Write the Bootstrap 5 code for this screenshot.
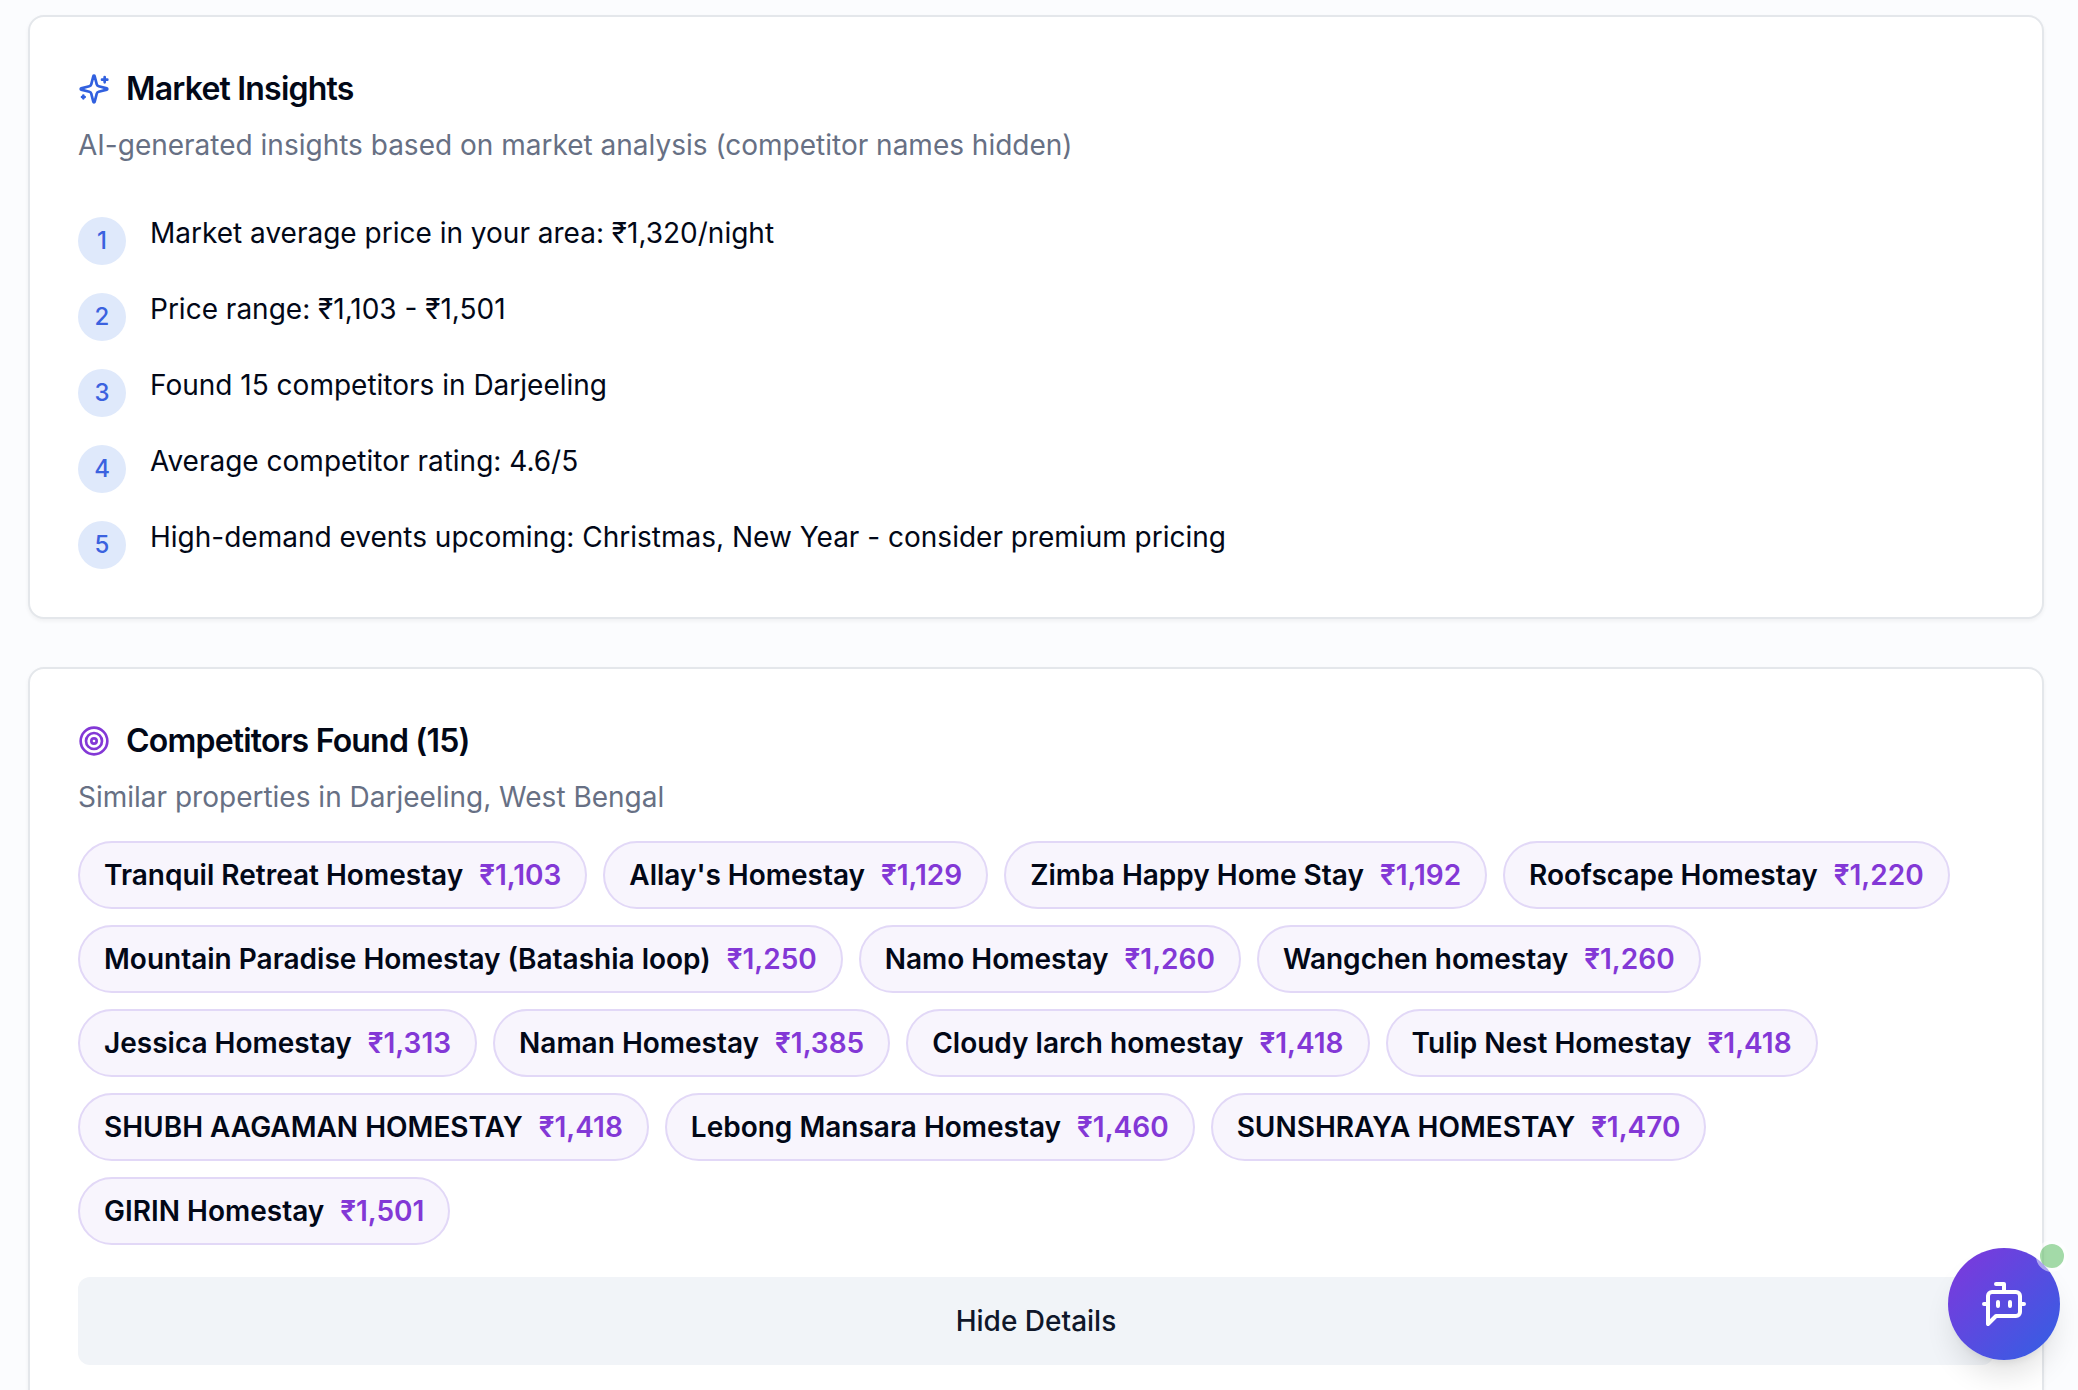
<!DOCTYPE html>
<html lang="en">
<head>
<meta charset="utf-8">
<meta name="viewport" content="width=device-width, initial-scale=1">
<title>Market Insights</title>
<link href="https://cdn.jsdelivr.net/npm/bootstrap@5.3.0/dist/css/bootstrap.min.css" rel="stylesheet">
<style>
  body { font-family: Inter, "Liberation Sans", sans-serif; font-size: 28px; line-height: 40px; color: #020817; background: #fbfcfe; }
  .page { padding: 15px 34px 0 28px; }
  .panel { border: 2px solid #e4e7eb; border-radius: 16px; margin-bottom: 48px; color: inherit; box-shadow: 0 2px 4px rgba(0, 0, 0, .05); }
  .panel > .card-body { padding: 48px; }
  .panel-title { font-size: 32px; line-height: 48px; font-weight: 600; letter-spacing: -.025em; gap: 16px; margin-bottom: 12px; }
  .panel-title svg, .chat-btn svg { fill: none; stroke: currentColor; stroke-width: 2; stroke-linecap: round; stroke-linejoin: round; }
  .panel-title svg { width: 32px; height: 32px; }
  .icon-blue { color: #3160df; }
  .icon-purple { color: #8338d6; }
  .subtitle { color: #677084; }
  .insights { gap: 24px; margin-top: 48px; }
  .insights li { gap: 24px; }
  .step { width: 48px; height: 48px; margin-top: 4px; font-size: 24px; font-weight: 500; color: #3b62df; background: #dfe9fb; }
  .chips { gap: 16px; margin-top: 24px; }
  .chip { gap: 16px; padding: 12px 24px; border: 2px solid #e2d8f7; background: #f8f5fd; font-weight: 600; }
  .price { color: #8338d6; }
  .toggle-btn { --bs-btn-font-size: 28px; --bs-btn-line-height: 40px; --bs-btn-border-radius: 12px; --bs-btn-font-weight: 500; --bs-btn-bg: #f1f4f8; --bs-btn-color: #0f172a; --bs-btn-hover-bg: #e8ecf2; margin-top: 32px; }
  .chat { right: 18px; bottom: 30px; }
  .chat-btn { width: 112px; height: 112px; color: #fff; background: linear-gradient(135deg, #8136dc, #3160e4); box-shadow: 0 20px 30px -6px rgba(0, 0, 0, .12), 0 8px 12px -8px rgba(0, 0, 0, .12); }
  .chat-btn svg { width: 48px; height: 48px; }
  .online { top: -8px; right: -8px; width: 32px; height: 32px; border: 4px solid #fff; background: #4db753; opacity: .5; }
</style>
<script src="https://cdn.jsdelivr.net/npm/bootstrap@5.3.0/dist/js/bootstrap.bundle.min.js" defer></script>
</head>
<body>
<main class="page vh-100 overflow-hidden">
  <section class="card panel">
    <div class="card-body">
      <h2 class="panel-title d-flex align-items-center">
        <svg class="icon-blue" viewBox="0 0 24 24" aria-hidden="true"><path d="M9.937 15.5A2 2 0 0 0 8.5 14.063l-6.135-1.582a.5.5 0 0 1 0-.962L8.5 9.936A2 2 0 0 0 9.937 8.5l1.582-6.135a.5.5 0 0 1 .963 0L14.063 8.5A2 2 0 0 0 15.5 9.937l6.135 1.581a.5.5 0 0 1 0 .964L15.5 14.063a2 2 0 0 0-1.437 1.437l-1.582 6.135a.5.5 0 0 1-.963 0z"/><path d="M20 3v4M22 5h-4M4 17v2M5 18H3"/></svg>
        Market Insights
      </h2>
      <p class="subtitle mb-0">AI-generated insights based on market analysis (competitor names hidden)</p>
      <ol class="insights list-unstyled d-flex flex-column mb-0">
        <li class="d-flex align-items-start"><span class="step rounded-circle d-flex align-items-center justify-content-center flex-shrink-0">1</span><span>Market average price in your area: ₹1,320/night</span></li>
        <li class="d-flex align-items-start"><span class="step rounded-circle d-flex align-items-center justify-content-center flex-shrink-0">2</span><span>Price range: ₹1,103 - ₹1,501</span></li>
        <li class="d-flex align-items-start"><span class="step rounded-circle d-flex align-items-center justify-content-center flex-shrink-0">3</span><span>Found 15 competitors in Darjeeling</span></li>
        <li class="d-flex align-items-start"><span class="step rounded-circle d-flex align-items-center justify-content-center flex-shrink-0">4</span><span>Average competitor rating: 4.6/5</span></li>
        <li class="d-flex align-items-start"><span class="step rounded-circle d-flex align-items-center justify-content-center flex-shrink-0">5</span><span>High-demand events upcoming: Christmas, New Year - consider premium pricing</span></li>
      </ol>
    </div>
  </section>

  <section class="card panel">
    <div class="card-body">
      <h2 class="panel-title d-flex align-items-center">
        <svg class="icon-purple" viewBox="0 0 24 24" aria-hidden="true"><circle cx="12" cy="12" r="10"/><circle cx="12" cy="12" r="6"/><circle cx="12" cy="12" r="2"/></svg>
        Competitors Found (15)
      </h2>
      <p class="subtitle mb-0">Similar properties in Darjeeling, West Bengal</p>
      <ul class="chips list-unstyled d-flex flex-wrap mb-0">
        <li class="chip rounded-pill d-flex"><span>Tranquil Retreat Homestay</span><span class="price">₹1,103</span></li>
        <li class="chip rounded-pill d-flex"><span>Allay's Homestay</span><span class="price">₹1,129</span></li>
        <li class="chip rounded-pill d-flex"><span>Zimba Happy Home Stay</span><span class="price">₹1,192</span></li>
        <li class="chip rounded-pill d-flex"><span>Roofscape Homestay</span><span class="price">₹1,220</span></li>
        <li class="chip rounded-pill d-flex"><span>Mountain Paradise Homestay (Batashia loop)</span><span class="price">₹1,250</span></li>
        <li class="chip rounded-pill d-flex"><span>Namo Homestay</span><span class="price">₹1,260</span></li>
        <li class="chip rounded-pill d-flex"><span>Wangchen homestay</span><span class="price">₹1,260</span></li>
        <li class="chip rounded-pill d-flex"><span>Jessica Homestay</span><span class="price">₹1,313</span></li>
        <li class="chip rounded-pill d-flex"><span>Naman Homestay</span><span class="price">₹1,385</span></li>
        <li class="chip rounded-pill d-flex"><span>Cloudy larch homestay</span><span class="price">₹1,418</span></li>
        <li class="chip rounded-pill d-flex"><span>Tulip Nest Homestay</span><span class="price">₹1,418</span></li>
        <li class="chip rounded-pill d-flex"><span>SHUBH AAGAMAN HOMESTAY</span><span class="price">₹1,418</span></li>
        <li class="chip rounded-pill d-flex"><span>Lebong Mansara Homestay</span><span class="price">₹1,460</span></li>
        <li class="chip rounded-pill d-flex"><span>SUNSHRAYA HOMESTAY</span><span class="price">₹1,470</span></li>
        <li class="chip rounded-pill d-flex"><span>GIRIN Homestay</span><span class="price">₹1,501</span></li>
      </ul>
      <button type="button" class="btn toggle-btn w-100 border-0 py-4">Hide Details</button>
    </div>
  </section>
</main>

<div class="chat position-fixed">
  <button type="button" class="chat-btn btn border-0 rounded-circle p-0 d-flex align-items-center justify-content-center" aria-label="Open chat assistant">
    <svg viewBox="0 0 24 24" aria-hidden="true"><path d="M12 6V2H8"/><path d="m8 18-4 4V8a2 2 0 0 1 2-2h12a2 2 0 0 1 2 2v8a2 2 0 0 1-2 2Z"/><path d="M2 12h2M9 11v2M15 11v2M20 12h2"/></svg>
  </button>
  <span class="online position-absolute rounded-circle"></span>
</div>
</body>
</html>
